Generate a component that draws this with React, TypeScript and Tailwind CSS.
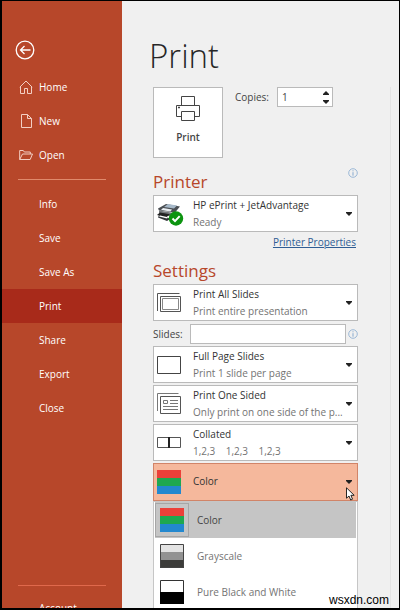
import React, { useState } from "react";

type SettingProps = {
  label: string;
  icon: React.ReactNode;
  options: string[];
  note?: string;
  value?: string;
  active?: boolean;
  onChange?: (value: string) => void;
};

const Caret = () => (
  <svg className="h-[4px] w-[6px]" viewBox="0 0 6 4" fill="#222">
    <path d="M0 0h6v1L3 4 0 1z" />
  </svg>
);

const BackIcon = () => (
  <svg className="size-5" viewBox="0 0 20 20" fill="none" stroke="#fff" strokeWidth="1.3">
    <circle cx="10" cy="10" r="8.8" />
    <path d="M15.5 10H5.5M9.5 6l-4 4 4 4" />
  </svg>
);

const HomeIcon = () => (
  <svg className="size-[14px]" viewBox="0 0 14 14" fill="none" stroke="#f3cfc4">
    <path d="M.8 7.2 7 1l6.2 6.2M1.500 6.500v7h4V8.500h3v5h4v-7" />
  </svg>
);

const NewIcon = () => (
  <svg className="size-[14px]" viewBox="0 0 14 14" fill="none" stroke="#f3cfc4">
    <path d="M2.500.5h6l4 4v9h-10zM8.500.5v4h4" />
  </svg>
);

const OpenIcon = () => (
  <svg className="size-[14px]" viewBox="0 0 14 14" fill="none" stroke="#f3cfc4">
    <path d="M.7 11.500v-9h3.600l1 1.500h6v2M.7 11.500 3.500 6h10l-2.300 5.500z" />
  </svg>
);

const InfoIcon = () => (
  <svg className="size-[10px]" viewBox="0 0 10 10" fill="none" stroke="#86a9cf">
    <circle cx="5" cy="5" r="4.300" strokeWidth=".8" />
    <path d="M5 4.200v3.500M5 2.300v1" />
  </svg>
);

const PrintIcon = () => (
  <svg className="h-[26px] w-6" viewBox="0 0 24 26" fill="#fff" stroke="#444">
    <path d="M5.500 9.500v-9h13v9" />
    <path d="M5.500 20.500h-5v-11h23v11h-5" />
    <path d="M5.500 15.500h13v9h-13z" />
    <path d="M2 11.500h2" strokeWidth="1.5" />
  </svg>
);

const PrinterIcon = () => (
  <svg className="h-6 w-[27px]" viewBox="0 0 27 24">
    <path d="M1 6.500 9 2l14 2.500-5 6-16-2z" fill="#4b4f54" />
    <path d="m7 5 4-3 9 1.500-3 3z" fill="#a7b9c9" />
    <path d="m6 6 9 1.500-1.500 2L4 8z" fill="#e9eef2" />
    <path d="m2 8.500 15 2.500v4L2 12z" fill="#73777b" />
    <path d="m3 10.500 10 1.800-4 3.200L0 13z" fill="#222" />
    <path d="m2 13 8 2 3 2-3 2-9-3.500z" fill="#33363a" />
    <path d="m3 13.500 8 1.800-1 1.200-8-2z" fill="#fff" />
    <circle cx="19" cy="16.500" r="7.200" fill="#0c9410" />
    <path d="m15.500 16.500 2.500 2.600 4.700-5" fill="none" stroke="#fff" strokeWidth="2" />
  </svg>
);

const AllSlidesIcon = () => (
  <svg className="size-6" viewBox="0 0 24 24" fill="none" stroke="#555">
    <path d="M.5 20V2.500h22" />
    <path d="M3.500 5.500h20v15h-20z" />
    <path d="M5.500 7.500h16v11h-16z" stroke="#888" />
  </svg>
);

const FullPageIcon = () => (
  <svg className="size-6" viewBox="0 0 24 24" fill="#fff" stroke="#444">
    <path d="M.5 3.500h23v17H.5z" />
  </svg>
);

const OneSidedIcon = () => (
  <svg className="size-6" viewBox="0 0 24 24" fill="none" stroke="#555">
    <path d="M.5 19V1.500h21" stroke="#777" />
    <path d="M3.500 4.500h20v17h-20z" />
    <path d="M6.500 8.500h4v3h-4zM13 8.500h8M13 11.500h8M6 14.500h15M6 17.500h15" stroke="#777" />
  </svg>
);

const CollatedIcon = () => (
  <svg className="size-6" viewBox="0 0 24 24" fill="#fff" stroke="#555">
    <path d="M.5 6.500h23v10H.5z" />
    <path d="M12 6v11" stroke="#222" strokeWidth="2" />
  </svg>
);

const ColorIcon = () => (
  <svg className="size-6" viewBox="0 0 24 24">
    <path d="M0 0h24v8H0z" fill="#ec4039" />
    <path d="M0 8h24v8H0z" fill="#1fa850" />
    <path d="M0 16h24v8H0z" fill="#2388cf" />
  </svg>
);

const GrayscaleIcon = () => (
  <svg className="size-6" viewBox="0 0 24 24">
    <path d="M0 0h24v8H0z" fill="#e3e3e3" />
    <path d="M0 8h24v8H0z" fill="#929292" />
    <path d="M0 16h24v8H0z" fill="#3c3c3a" />
    <path d="M.5.5h23v23H.5z" fill="none" stroke="#444" />
  </svg>
);

const BlackWhiteIcon = () => (
  <svg className="size-6" viewBox="0 0 24 24">
    <path d="M.5.5h23v23H.5z" fill="#fff" stroke="#333" />
    <path d="M0 12h24v12H0z" />
  </svg>
);

const Cursor = () => (
  <svg className="h-[14px] w-[9px]" viewBox="0 0 9 14" fill="#fff" stroke="#111" strokeWidth=".9">
    <path d="M.5.8v10.400L3 9l1.700 4 1.800-.8L4.900 8.300h3.300z" />
  </svg>
);

const Setting = ({ label, icon, options, note, value, active, onChange }: SettingProps) => (
  <div
    className={
      active
        ? "grid h-[38px] border border-[#d18468] bg-[#f5b89c]"
        : "grid h-[37px] border border-[#bababa] bg-white"
    }
  >
    <select
      aria-label={label}
      value={value}
      onChange={(e) => onChange?.(e.target.value)}
      className={
        active
          ? "col-start-1 row-start-1 min-w-0 appearance-none pb-[2px] pl-[39px] text-[#333] outline-none"
          : "col-start-1 row-start-1 min-w-0 appearance-none pb-[18px] pl-[39px] text-[#333] outline-none"
      }
    >
      {options.map((option) => (
        <option key={option}>{option}</option>
      ))}
    </select>
    <div className="pointer-events-none col-start-1 row-start-1 flex min-w-0 items-center pr-[5px] pl-[3px]">
      <span className="w-9 shrink-0">{icon}</span>
      <span className="min-w-0 flex-1 pt-[17px] whitespace-pre text-[#737373]">{note}</span>
      <span className="shrink-0">
        <Caret />
      </span>
    </div>
  </div>
);

const mainLinks = [
  { name: "Home", icon: <HomeIcon /> },
  { name: "New", icon: <NewIcon /> },
  { name: "Open", icon: <OpenIcon /> },
];

const fileLinks = ["Info", "Save", "Save As", "Print", "Share", "Export", "Close"];

const colorModes = [
  { name: "Color", icon: <ColorIcon /> },
  { name: "Grayscale", icon: <GrayscaleIcon /> },
  { name: "Pure Black and White", icon: <BlackWhiteIcon /> },
];

const Sidebar = () => (
  <nav className="flex w-[120px] shrink-0 flex-col overflow-hidden bg-[#b7472a] font-medium text-white">
    <button aria-label="Back" className="mt-[39px] mb-[10px] ml-[13px] size-5 shrink-0">
      <BackIcon />
    </button>
    {mainLinks.map(({ name, icon }) => (
      <a key={name} href="#" className="flex h-[34px] shrink-0 items-center gap-[6px] pl-[17px]">
        {icon}
        {name}
      </a>
    ))}
    <hr className="mx-4 my-[7px] border-[#e08a6c]" />
    {fileLinks.map((name) => (
      <a
        key={name}
        href="#"
        className={
          name === "Print"
            ? "flex h-[34px] shrink-0 items-center bg-[#a82a1a] pl-[37px]"
            : "flex h-[34px] shrink-0 items-center pl-[37px]"
        }
      >
        {name}
      </a>
    ))}
    <hr className="mx-4 mt-[160px] mb-[5px] border-[#e0694c]" />
    <a href="#" className="flex h-[34px] shrink-0 items-center pl-[37px]">
      Account
    </a>
  </nav>
);

const App = () => {
  const [copies, setCopies] = useState(1);
  const [mode, setMode] = useState("Color");

  return (
    <div className="relative flex h-screen overflow-hidden border-t border-r border-b-2 border-l-2 border-black bg-[#f0f0f0] font-['Open_Sans','Noto_Sans',sans-serif] text-[10px] leading-[16px] text-[#444]">
      <Sidebar />
      <main className="min-w-0 flex-1 pr-2 pl-[31px]">
        <h1 className="-ml-1 pt-[32px] font-['Open_Sans_Light','Noto_Sans_Light','Lato',sans-serif] text-[33px] leading-[46px] font-light text-[#262626]">
          Print
        </h1>
        <div className="mt-[8px] border-r border-[#e4e4e4] pr-8">
          <div className="flex items-start">
            <button className="flex h-[71px] w-[70px] shrink-0 flex-col items-center gap-[7px] border border-[#bababa] bg-white pt-2 font-semibold">
              <PrintIcon />
              Print
            </button>
            <label htmlFor="copies" className="ml-3 pt-[2px]">
              Copies:
            </label>
            <div className="mr-[25px] ml-auto flex h-5 w-14 border border-[#bababa] bg-white">
              <input
                id="copies"
                type="number"
                min={1}
                value={copies}
                onChange={(e) => setCopies(Number(e.target.value))}
                className="w-full min-w-0 flex-1 pl-1 outline-none [appearance:textfield]"
              />
              <div className="flex w-3 shrink-0 flex-col items-center justify-center gap-[5px]">
                <button aria-label="More copies" className="rotate-180" onClick={() => setCopies(copies + 1)}>
                  <Caret />
                </button>
                <button aria-label="Fewer copies" onClick={() => setCopies(Math.max(1, copies - 1))}>
                  <Caret />
                </button>
              </div>
            </div>
          </div>

          <div className="mt-[10px] flex justify-between">
            <h2 className="text-[17px] leading-[27px] text-[#b7472a]">Printer</h2>
            <InfoIcon />
          </div>
          <Setting
            label="Printer"
            icon={<PrinterIcon />}
            options={["HP ePrint + JetAdvantage"]}
            note="Ready"
          />
          <div className="mt-[2px] flex justify-end pr-[2px]">
            <a href="#" className="text-[#2f5d94] underline">
              Printer Properties
            </a>
          </div>

          <h2 className="mt-[7px] text-[17px] leading-[27px] text-[#b7472a]">Settings</h2>
          <div className="flex flex-col gap-[2px]">
            <Setting
              label="Print range"
              icon={<AllSlidesIcon />}
              options={["Print All Slides"]}
              note="Print entire presentation"
            />
            <div className="flex h-[21px] items-center">
              <label htmlFor="slides" className="w-[37px] shrink-0">
                Slides:
              </label>
              <input
                id="slides"
                type="text"
                className="mr-[2px] h-5 min-w-0 flex-1 border border-[#bababa] bg-white px-1 outline-none"
              />
              <InfoIcon />
            </div>
            <Setting
              label="Layout"
              icon={<FullPageIcon />}
              options={["Full Page Slides"]}
              note="Print 1 slide per page"
            />
            <Setting
              label="Sides"
              icon={<OneSidedIcon />}
              options={["Print One Sided"]}
              note="Only print on one side of the p..."
            />
            <Setting
              label="Collation"
              icon={<CollatedIcon />}
              options={["Collated"]}
              note="1,2,3    1,2,3    1,2,3"
            />
            <div className="relative">
              <Setting
                label="Color mode"
                icon={colorModes.find(({ name }) => name === mode)?.icon}
                options={colorModes.map(({ name }) => name)}
                value={mode}
                onChange={setMode}
                active
              />
              <span className="pointer-events-none absolute right-[3px] bottom-0">
                <Cursor />
              </span>
              <div className="absolute inset-x-0 top-full border border-[#c6c6c6] bg-white px-px pb-2">
                {colorModes.map(({ name, icon }) => (
                  <button
                    key={name}
                    onClick={() => setMode(name)}
                    className={
                      name === mode
                        ? "flex h-9 w-full items-center gap-2 bg-[#c5c5c5] text-[#444]"
                        : "flex h-9 w-full items-center gap-2 text-[#737373]"
                    }
                  >
                    <span
                      className={
                        name === mode
                          ? "border border-[#a6a6a6] p-[4px]"
                          : "border border-transparent p-[4px]"
                      }
                    >
                      {icon}
                    </span>
                    {name}
                  </button>
                ))}
              </div>
            </div>
          </div>
          <div className="h-[120px]" />
        </div>
      </main>
      <p className="absolute right-[10px] bottom-0 font-['Liberation_Sans',sans-serif] text-[12px] text-black">
        wsxdn.com
      </p>
    </div>
  );
};

export default App;
